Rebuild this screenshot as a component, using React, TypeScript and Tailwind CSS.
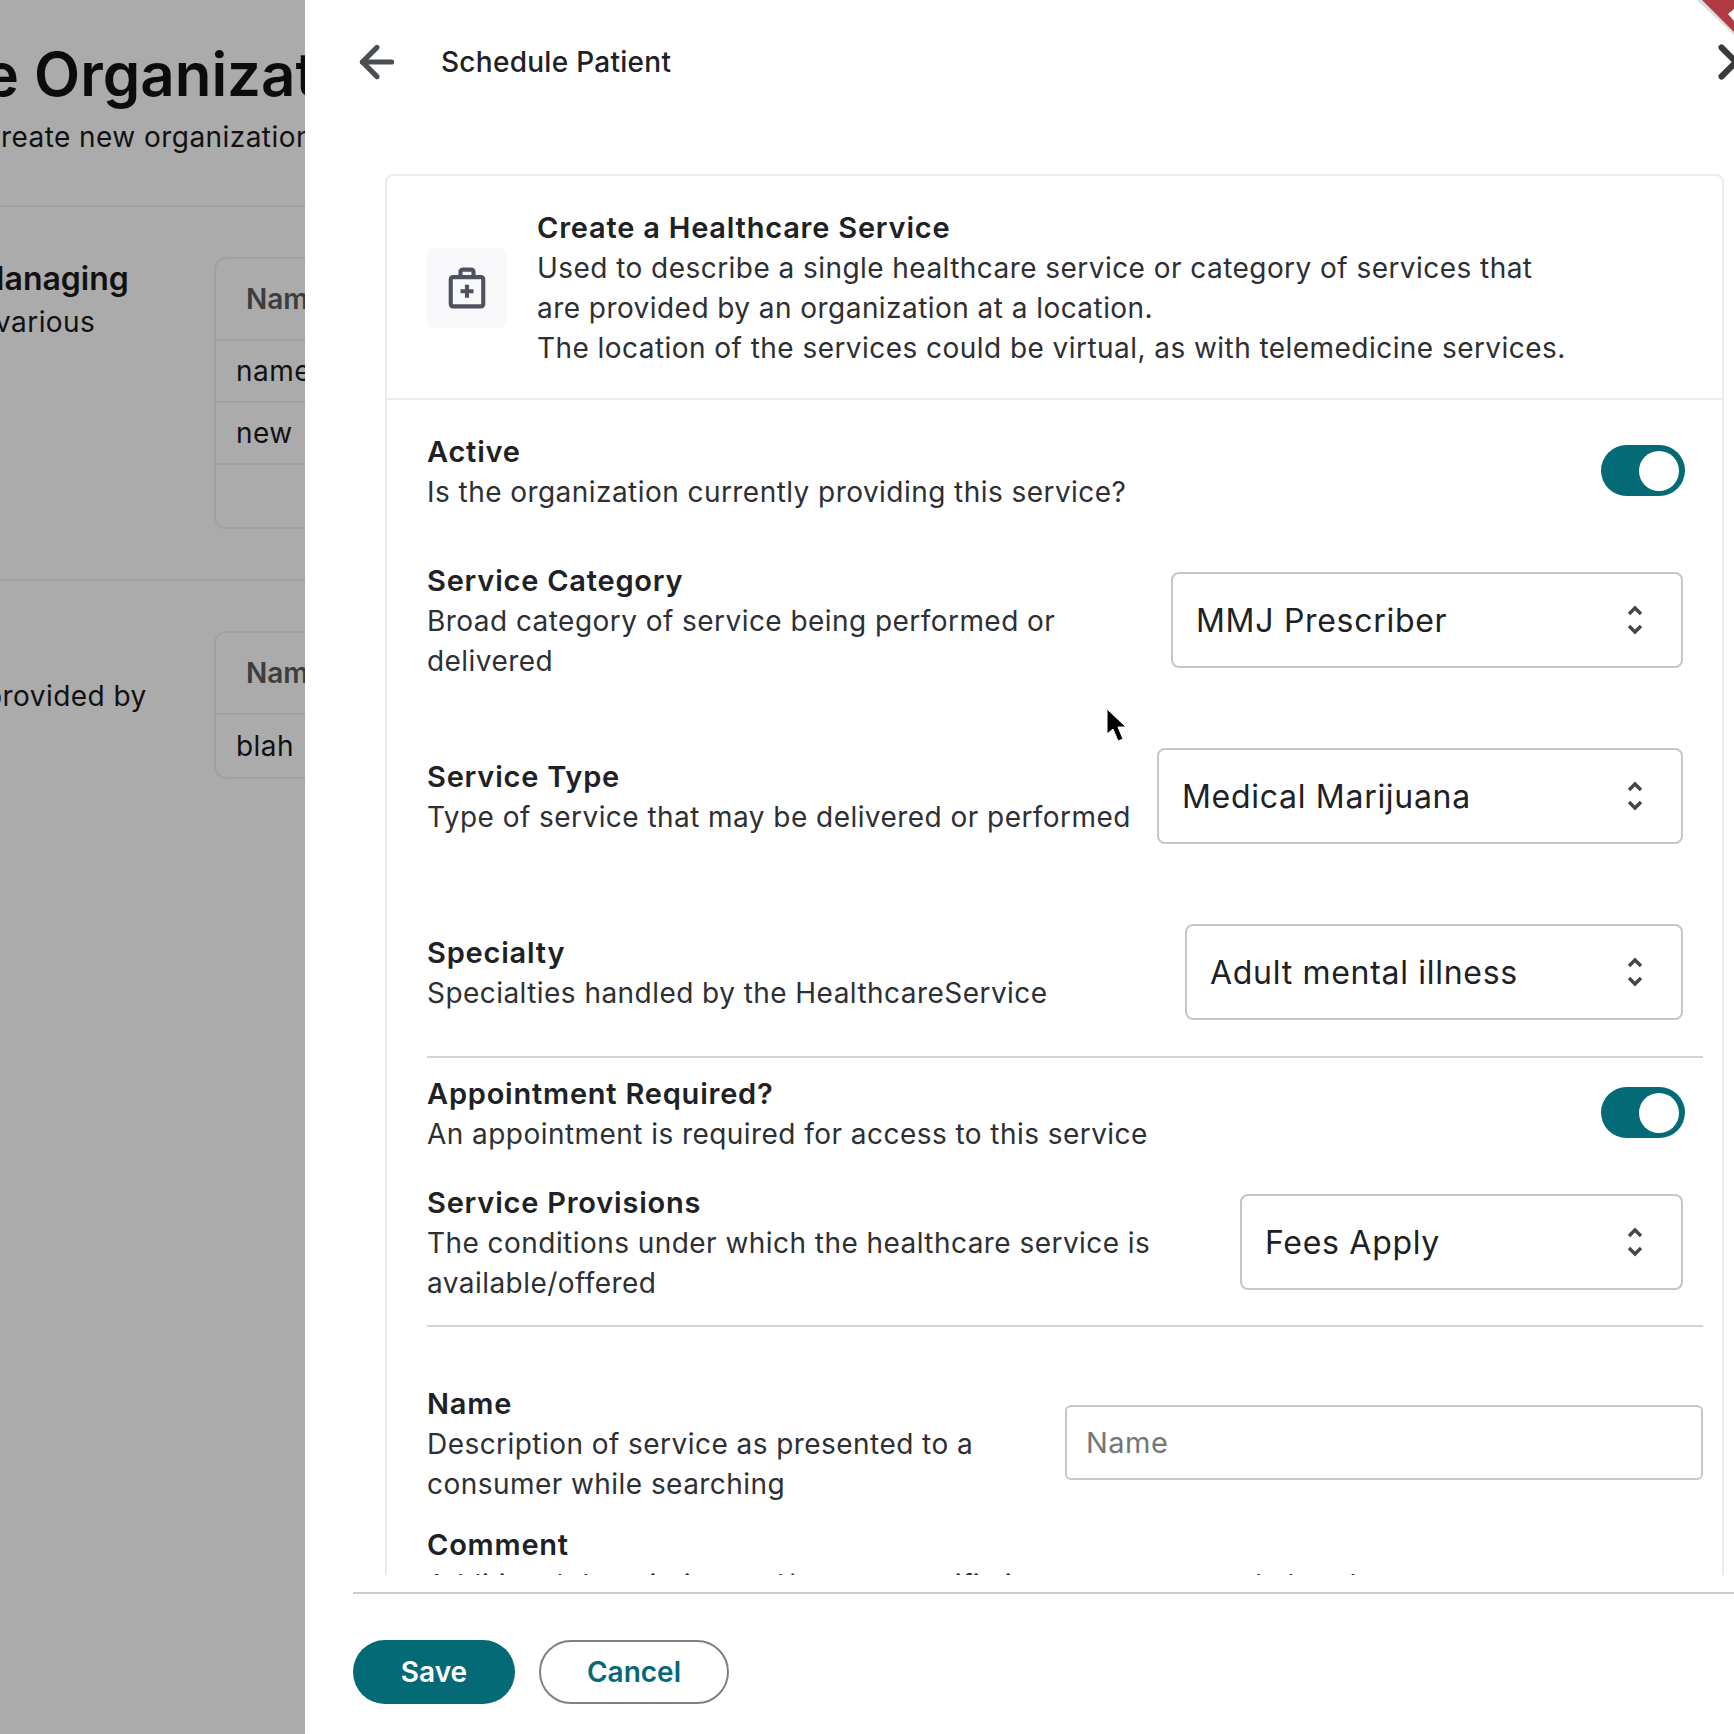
import { ArrowLeft, X } from "lucide-react";

function UpDown() {
    return (
        <svg width="18" height="30" viewBox="0 0 18 30" fill="none" stroke="#45474a" strokeWidth="3.4" className="shrink-0">
            <polyline points="3,9 9,3 15,9" />
            <polyline points="3,21 9,27 15,21" />
        </svg>
    );
}

function Toggle() {
    return (
        <div className="w-[84px] h-[51px] rounded-full bg-[#046a75] flex items-center justify-end pr-[6px] shrink-0">
            <div className="w-[40px] h-[40px] rounded-full bg-white"></div>
        </div>
    );
}

function Select({ value, width }: { value: string; width: string }) {
    return (
        <div className={`${width} h-[96px] border-2 border-[#c6c6c6] rounded-lg flex items-center justify-between pl-[23px] pr-[37px] shrink-0 text-[32px] tracking-[0.022em] text-[#202124]`}>
            <span className="pt-[2px]">{value}</span>
            <UpDown />
        </div>
    );
}

function Label({ title, children }: { title: string; children?: React.ReactNode }) {
    return (
        <div className="min-w-0">
            <div className="text-[29px] leading-[40px] font-semibold text-[#202124] tracking-[0.027em]">{title}</div>
            <div className="text-[28px] leading-[40px] text-[#2e2f32] tracking-[0.016em]">{children}</div>
        </div>
    );
}

function LeftTable({ rows }: { rows: string[] }) {
    return (
        <div className="w-[400px] border-2 border-[#a1a1a1] rounded-xl text-[28px] shrink-0">
            <div className="h-[82px] flex items-center pl-[30px] font-semibold text-[#3d3d3d] border-b-2 border-[#a1a1a1]">Name</div>
            {rows.map((r, i) => (
                <div key={i} className="h-[62px] flex items-center pl-[20px] text-[#111111] border-b-2 last:border-b-0 border-[#a1a1a1] tracking-[0.016em]">{r}</div>
            ))}
        </div>
    );
}

export default function App() {
    return (
        <div className="h-screen w-full flex overflow-hidden bg-white relative font-['Inter',sans-serif]">
            {/* Dimmed page behind the drawer */}
            <div className="w-[305px] shrink-0 bg-[#ababab] overflow-hidden">
                <div className="w-[800px]">
                    <div className="-ml-[215px] mt-[36px] h-[76px] text-[60px] leading-[76px] font-semibold text-[#0c0c0c] whitespace-nowrap">Manage Organizations</div>
                    <div className="-ml-[20px] mt-[5px] h-[40px] text-[28px] leading-[40px] tracking-[0.016em] text-[#111111] whitespace-nowrap">Create new organizations</div>
                    <div className="h-[2px] bg-[#a1a1a1] mt-[48px] w-[305px]"></div>
                    <div className="flex mt-[50px]">
                        <div className="w-[214px] shrink-0">
                            <div className="-ml-[25px] mt-[2px] h-[40px] text-[32px] leading-[40px] font-semibold text-[#111111] whitespace-nowrap">Managing</div>
                            <div className="-ml-[5px] mt-[3px] text-[28px] leading-[40px] tracking-[0.016em] text-[#111111] whitespace-nowrap">various</div>
                        </div>
                        <LeftTable rows={["name", "new", ""]} />
                    </div>
                    <div className="h-[2px] bg-[#a1a1a1] mt-[50px] w-[305px]"></div>
                    <div className="flex mt-[50px]">
                        <div className="w-[214px] shrink-0">
                            <div className="-ml-[15px] mt-[45px] text-[28px] leading-[40px] tracking-[0.016em] text-[#111111] whitespace-nowrap">provided by</div>
                        </div>
                        <LeftTable rows={["blah"]} />
                    </div>
                </div>
            </div>

            {/* Drawer */}
            <div className="flex-1 min-w-0 flex flex-col overflow-hidden">
                <header className="h-[124px] shrink-0 flex items-center pl-[47px]">
                    <ArrowLeft size={50} strokeWidth={2.5} className="text-[#4a4e52] shrink-0" />
                    <div className="ml-[39px] text-[28px] font-medium text-[#202124] tracking-[0.01em]">Schedule Patient</div>
                    <X size={58} strokeWidth={2.5} className="text-[#3a3a3a] shrink-0 ml-auto -mr-[31px]" />
                </header>

                <div className="flex-1 min-h-0 overflow-hidden pl-[80px] pr-[10px] pt-[50px]">
                    <div className="border-2 border-[#ececec] rounded-lg">
                        <div className="flex h-[224px] border-b-2 border-[#ececec]">
                            <div className="w-[80px] h-[80px] ml-[40px] mt-[72px] rounded-lg bg-[#f8f8fb] flex items-center justify-center shrink-0">
                                <svg width="52" height="52" viewBox="0 0 24 24" fill="none" stroke="#4d5160" strokeWidth="1.9" strokeLinejoin="round">
                                    <rect x="4.5" y="7" width="15" height="13.5" rx="1" />
                                    <path d="M9 7V4.5a1 1 0 0 1 1-1h4a1 1 0 0 1 1 1V7" />
                                    <path d="M12 10.5v6M9 13.5h6" />
                                </svg>
                            </div>
                            <div className="ml-[30px] mt-[32px] text-[28px] leading-[40px] tracking-[0.016em] text-[#2e2f32]">
                                <div className="text-[29px] font-semibold text-[#202124] tracking-[0.027em]">Create a Healthcare Service</div>
                                <div>Used to describe a single healthcare service or category of services that</div>
                                <div>are provided by an organization at a location.</div>
                                <div>The location of the services could be virtual, as with telemedicine services.</div>
                            </div>
                        </div>

                        <div className="pl-[40px] pr-[19px]">
                            <div className="flex justify-between items-start mt-[32px] pr-[18px]">
                                <Label title="Active">Is the organization currently providing this service?</Label>
                                <div className="mt-[13px]"><Toggle /></div>
                            </div>

                            <div className="flex justify-between items-start gap-[30px] mt-[49px] pr-[20px]">
                                <Label title="Service Category">Broad category of service being performed or delivered</Label>
                                <div className="mt-[11px]"><Select value="MMJ Prescriber" width="w-[512px]" /></div>
                            </div>

                            <div className="flex justify-between items-start gap-[20px] mt-[76px] pr-[20px]">
                                <Label title="Service Type">Type of service that may be delivered or performed</Label>
                                <div className="-mt-[9px]"><Select value="Medical Marijuana" width="w-[526px]" /></div>
                            </div>

                            <div className="flex justify-between items-start gap-[30px] mt-[89px] pr-[20px]">
                                <Label title="Specialty">Specialties handled by the HealthcareService</Label>
                                <div className="-mt-[9px]"><Select value="Adult mental illness" width="w-[498px]" /></div>
                            </div>

                            <div className="h-[2px] bg-[#d4d4d4] mt-[36px]"></div>

                            <div className="flex justify-between items-start mt-[16px] pr-[18px]">
                                <Label title="Appointment Required?">An appointment is required for access to this service</Label>
                                <div className="mt-[13px]"><Toggle /></div>
                            </div>

                            <div className="flex justify-between items-start gap-[40px] mt-[29px] pr-[20px]">
                                <Label title="Service Provisions">The conditions under which the healthcare service is available/offered</Label>
                                <div className="mt-[11px]"><Select value="Fees Apply" width="w-[443px]" /></div>
                            </div>

                            <div className="h-[2px] bg-[#d4d4d4] mt-[22px]"></div>

                            <div className="flex justify-between items-start gap-[60px] mt-[57px]">
                                <Label title="Name">Description of service as presented to a consumer while searching</Label>
                                <div className="w-[638px] h-[75px] border-2 border-[#c6c6c6] rounded-md shrink-0 flex items-center pl-[19px] text-[29px] tracking-[0.016em] text-[#75767a] mt-[21px]">Name</div>
                            </div>

                            <div className="mt-[21px]">
                                <Label title="Comment">Additional description and/or any specific issues not covered elsewhere</Label>
                            </div>
                        </div>
                    </div>
                </div>

                <footer className="h-[159px] shrink-0 pt-[17px] pl-[48px]">
                    <div className="h-[2px] bg-[#cccccc]"></div>
                    <div className="flex gap-[24px] mt-[46px]">
                        <button className="w-[162px] h-[64px] rounded-full bg-[#046a75] text-white text-[28px] font-semibold">Save</button>
                        <button className="w-[190px] h-[64px] rounded-full border-2 border-[#808080] text-[#046a75] text-[28px] font-semibold">Cancel</button>
                    </div>
                </footer>
            </div>

            {/* Mouse pointer */}
            <svg width="22" height="38" viewBox="0 0 22 38" className="absolute left-[1106px] top-[708px]">
                <path d="M1 1 L1 26 L7 21 L12 33 L17 31 L12 19 L20 19 Z" fill="#000000" stroke="#ffffff" strokeWidth="1" />
            </svg>

            {/* Corner ribbon */}
            <svg width="40" height="40" viewBox="0 0 40 40" className="absolute right-0 top-0">
                <polygon points="3,0 40,35 40,0" fill="#d5dede" />
                <polygon points="8,0 40,32 40,0" fill="#b03b42" />
                <polygon points="34,14 40,9 40,21" fill="#ffffff" />
            </svg>
        </div>
    );
}
